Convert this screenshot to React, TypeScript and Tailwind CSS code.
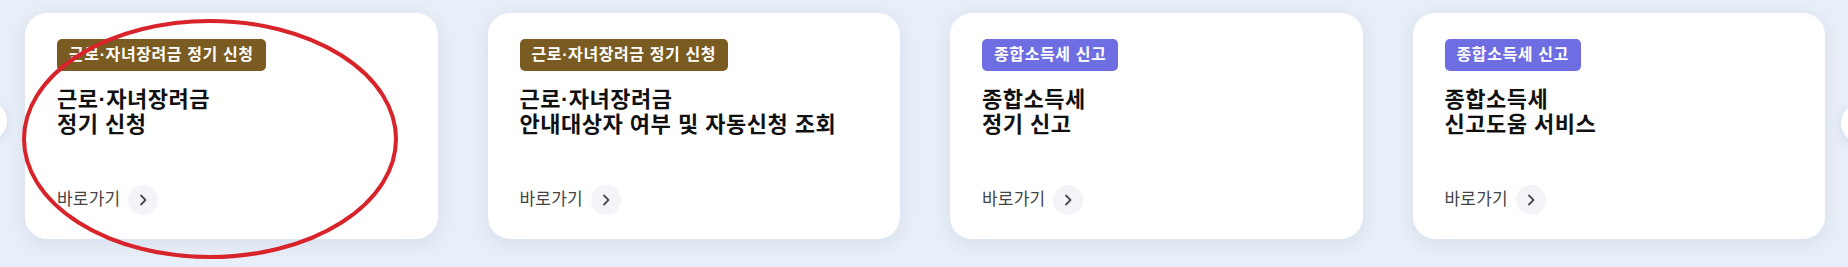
import { type JSX } from "react";

type Card = {
  badge: string;
  tone: "brown" | "purple";
  lines: string[];
};

const cards: Card[] = [
  { badge: "근로·자녀장려금 정기 신청", tone: "brown", lines: ["근로·자녀장려금", "정기 신청"] },
  { badge: "근로·자녀장려금 정기 신청", tone: "brown", lines: ["근로·자녀장려금", "안내대상자 여부 및 자동신청 조회"] },
  { badge: "종합소득세 신고", tone: "purple", lines: ["종합소득세", "정기 신고"] },
  { badge: "종합소득세 신고", tone: "purple", lines: ["종합소득세", "신고도움 서비스"] },
];

function ServiceCard({ badge, tone, lines }: Card): JSX.Element {
  return (
    <div className="w-[412.5px] h-[226px] shrink-0 bg-white rounded-[22px] shadow-[0_4px_18px_rgba(150,170,205,0.25)] pt-[26px] pl-[32px] pr-6 pb-[24px] flex flex-col">
      {/* badge */}
      <div className="flex">
        <span
          className={
            "h-[32px] px-3 rounded-[5px] text-white text-[16px] font-semibold leading-[32px] tracking-[0.6px] " +
            (tone === "brown" ? "bg-[#7a5c22]" : "bg-[#6e6ee2]")
          }
        >
          {badge}
        </span>
      </div>

      {/* title */}
      <h3 className="mt-[16px] text-[22px] leading-[25px] font-bold text-[#111] tracking-[0.5px]">
        {lines.map((l, i) => (
          <span key={i} className="block">
            {l}
          </span>
        ))}
      </h3>

      {/* link */}
      <div className="mt-auto flex items-center gap-2">
        <span className="text-[17px] text-[#444] tracking-[0.2px]">바로가기</span>
        <span className="w-[30px] h-[30px] rounded-full bg-[#f2f4f8] flex items-center justify-center">
          <svg width="10" height="12" viewBox="0 0 10 12" fill="none">
            <path d="M3 1.5 L7.5 6 L3 10.5" stroke="#4a4a52" strokeWidth="1.8" strokeLinecap="round" strokeLinejoin="round" />
          </svg>
        </span>
      </div>
    </div>
  );
}

export default function App(): JSX.Element {
  return (
    <div
      className="relative w-[1848px] h-[267px] overflow-hidden bg-[#e9eff8]"
      style={{ fontFamily: '"Liberation Sans", "Noto Sans CJK KR", sans-serif' }}
    >
      <div className="flex gap-[50px] pl-[25px] pt-[13px]">
        {cards.map((c, i) => (
          <ServiceCard key={i} {...c} />
        ))}
      </div>

      {/* carousel arrows, mostly off-screen */}
      <div className="absolute left-[-33px] top-[101px] w-[40px] h-[40px] rounded-full bg-white shadow-[0_2px_8px_rgba(150,170,205,0.3)]" />
      <div className="absolute left-[1841px] top-[103px] w-[40px] h-[40px] rounded-full bg-white shadow-[0_2px_8px_rgba(150,170,205,0.3)]" />

      {/* red hand-drawn annotation */}
      <svg className="absolute left-0 top-0 pointer-events-none" width="460" height="267">
        <ellipse cx="210" cy="139" rx="186" ry="118" fill="none" stroke="#d8232a" strokeWidth="4" />
      </svg>
    </div>
  );
}
